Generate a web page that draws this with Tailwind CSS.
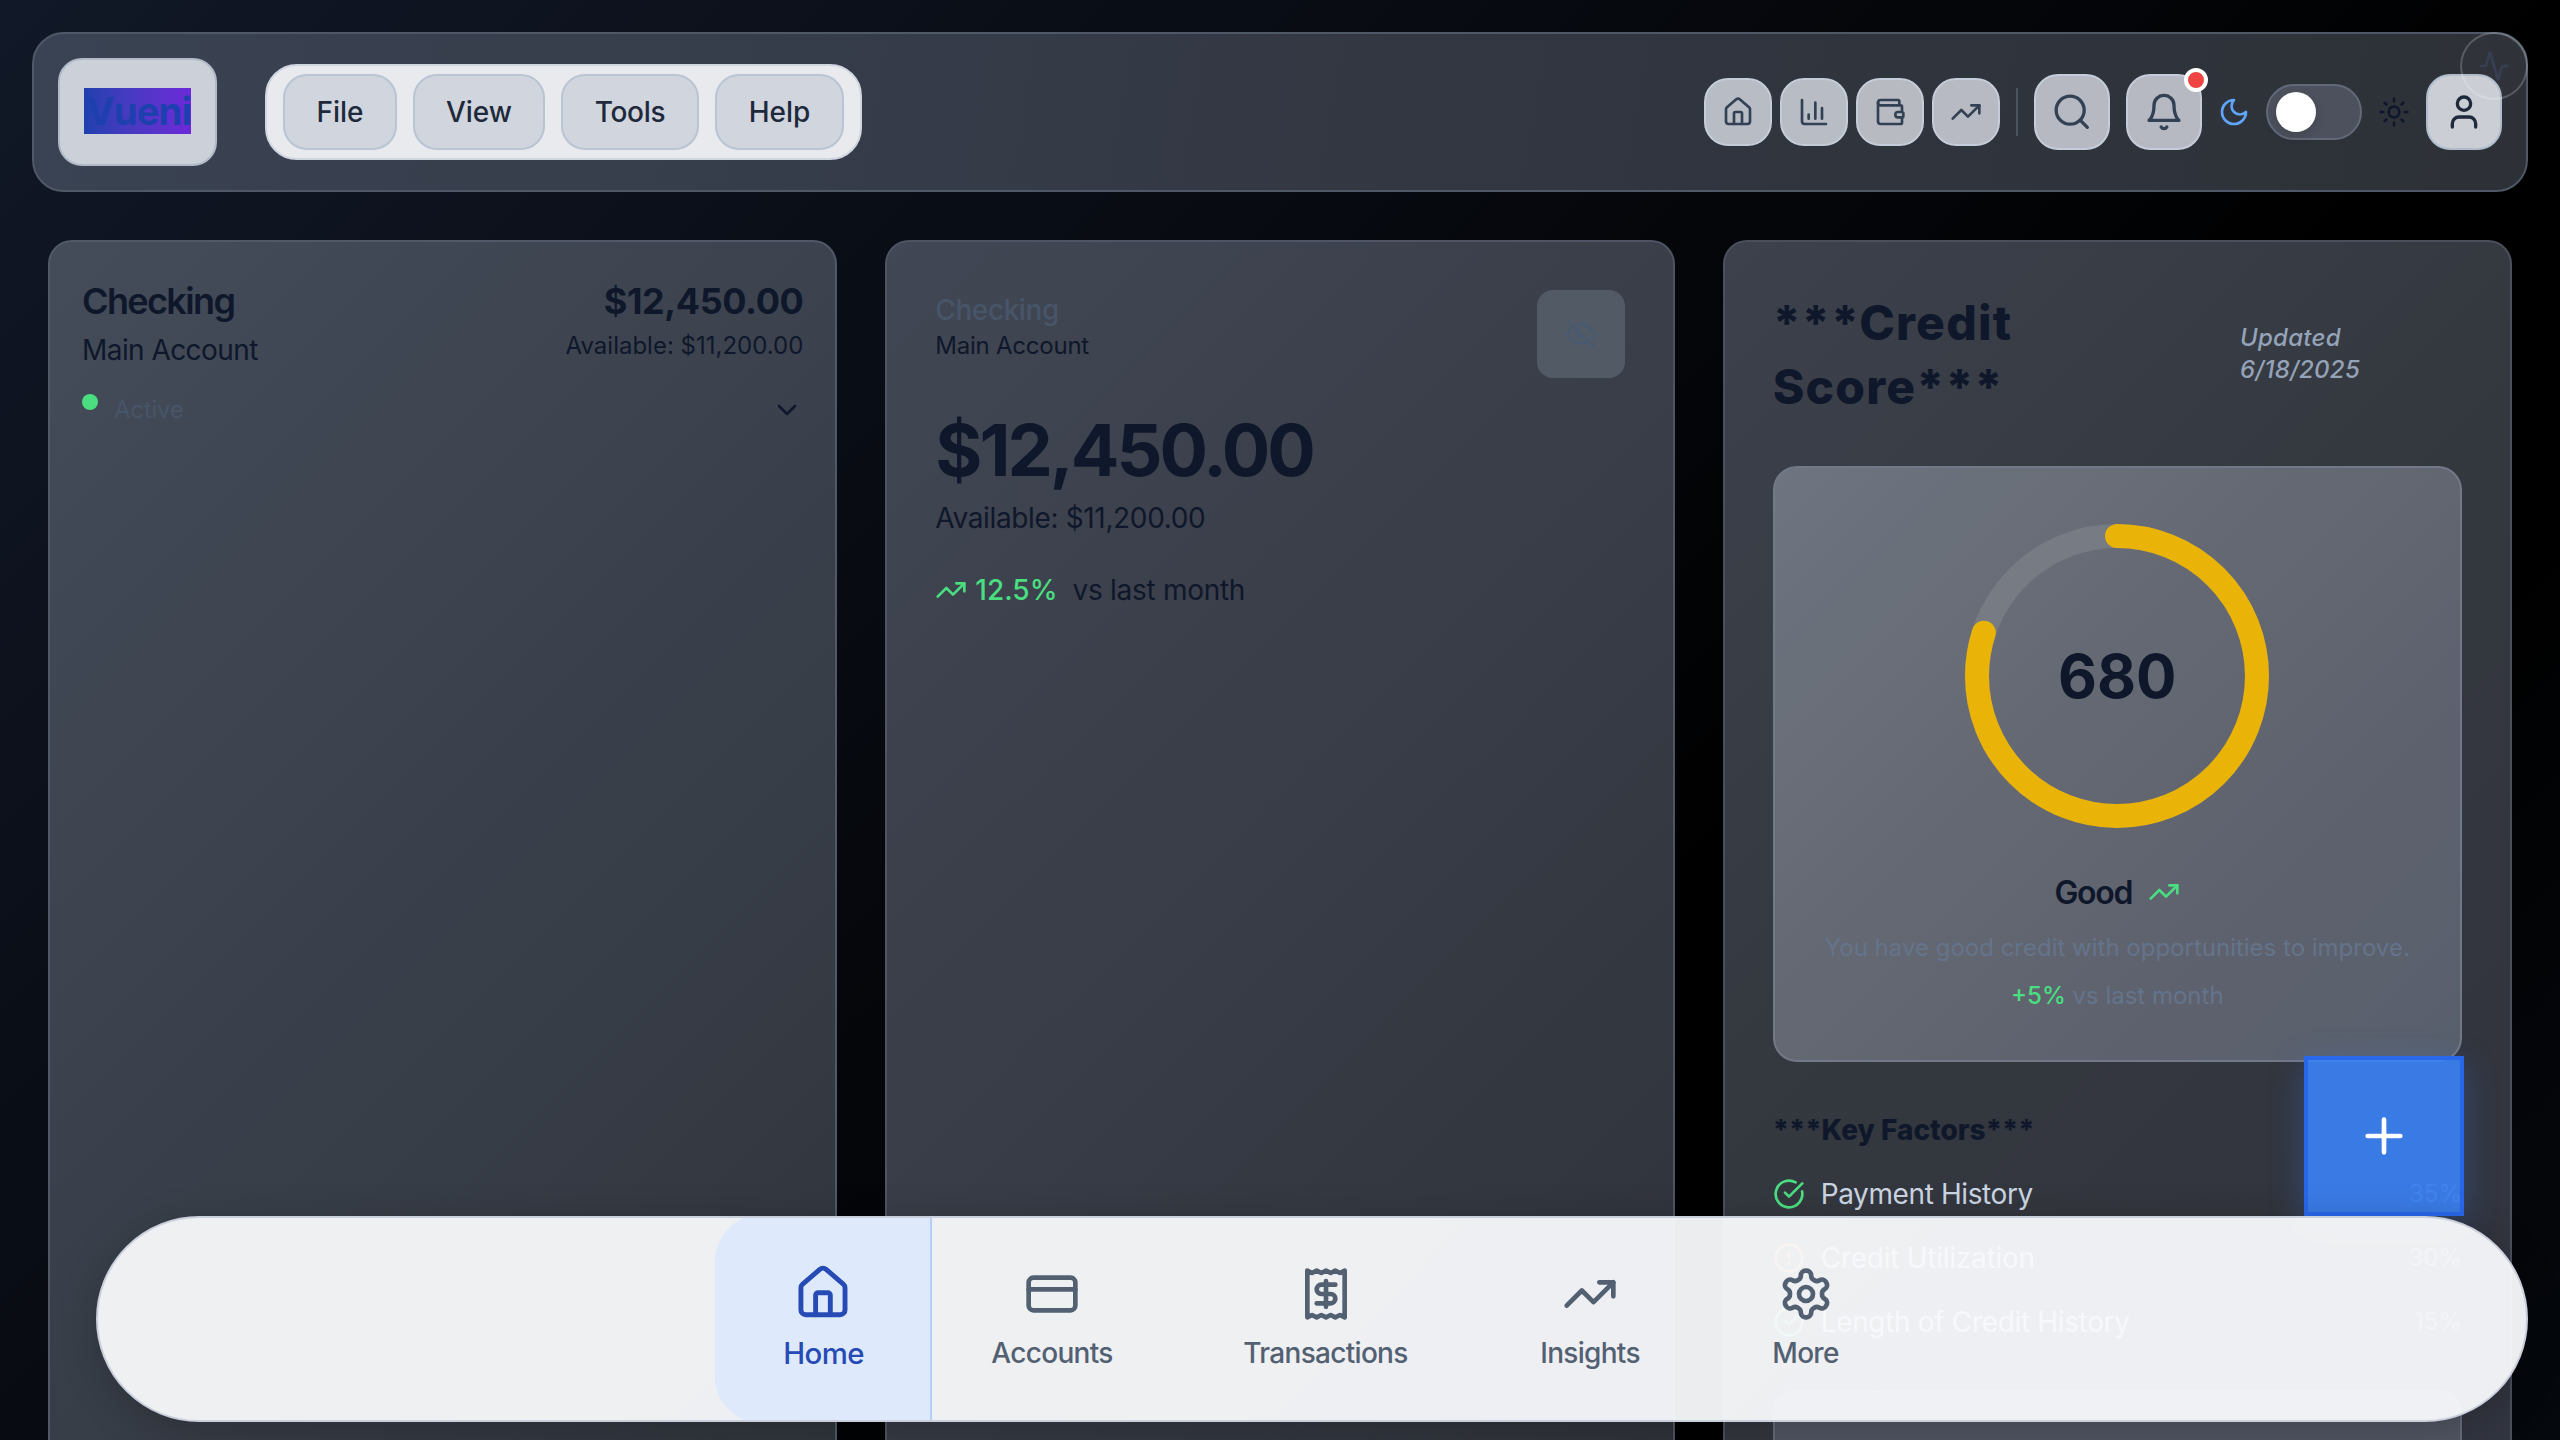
<!DOCTYPE html>
<html lang="en">
<head>
<meta charset="utf-8">
<title>Vueni</title>
<script src="https://cdn.jsdelivr.net/npm/@tailwindcss/browser@4"></script>
</head>
<body class="relative w-[2560px] h-[1440px] overflow-hidden bg-[linear-gradient(135deg,#111827_0px,#000_1850px,#000_2150px,#05080d_2830px)] font-['Inter',sans-serif] text-[28px] leading-[40px] text-[#0f172a]">
<svg class="hidden">
  <defs>
    <g id="house"><path d="M15 21v-8a1 1 0 0 0-1-1h-4a1 1 0 0 0-1 1v8"/><path d="M3 10a2 2 0 0 1 .709-1.528l7-5.999a2 2 0 0 1 2.582 0l7 5.999A2 2 0 0 1 21 10v9a2 2 0 0 1-2 2H5a2 2 0 0 1-2-2z"/></g>
    <g id="trend"><path d="M22 7 13.5 15.5 8.5 10.5 2 17"/><path d="M16 7h6v6"/></g>
    <g id="check"><path d="M21.801 10A10 10 0 1 1 17 3.335"/><path d="m9 11 3 3L22 4"/></g>
  </defs>
</svg>

<div class="flex flex-col h-full">
  <header class="mx-8 mt-8 h-40 shrink-0 flex items-center justify-between px-6 rounded-[32px] border-2 border-[#4f5867] bg-[linear-gradient(100deg,#3a4353,#31353f_65%,#2d3137)]">
    <div class="flex items-center">
      <div class="h-[108px] w-[159px] flex items-center justify-center rounded-[24px] border-2 border-[#b0bac8] bg-[#ccd1d9]">
        <span class="w-[107px] h-[46px] -translate-y-[1px] flex items-center justify-end bg-linear-to-r from-[#1e40af] to-[#6d28d9] text-[38.4px] tracking-[-0.025em] font-bold text-[#1e40af] whitespace-nowrap">Vueni</span>
      </div>
      <nav class="ml-12 h-24 flex items-center gap-4 px-4 rounded-[32px] border-2 border-[#cfd6df] bg-[#e8eaee] font-medium text-[#1e293b]">
        <a class="h-[76px] w-[114px] flex items-center justify-center rounded-[24px] border-2 border-[#bac4d3] bg-[#d1d5de]">File</a>
        <a class="h-[76px] w-[132px] flex items-center justify-center rounded-[24px] border-2 border-[#bac4d3] bg-[#d1d5de]">View</a>
        <a class="h-[76px] w-[138px] flex items-center justify-center rounded-[24px] border-2 border-[#bac4d3] bg-[#d1d5de] tracking-[-0.01em]">Tools</a>
        <a class="h-[76px] w-[129px] flex items-center justify-center rounded-[24px] border-2 border-[#bac4d3] bg-[#d1d5de]">Help</a>
      </nav>
    </div>
    <div class="flex items-center gap-4 text-[#334155]">
      <div class="flex gap-2">
        <button class="size-[68px] flex items-center justify-center rounded-[24px] border-2 border-[#c3ccd8] bg-[#b8bcc5]"><svg class="size-8" viewBox="0 0 24 24" fill="none" stroke="currentColor" stroke-width="2" stroke-linecap="round" stroke-linejoin="round"><use href="#house"/></svg></button>
        <button class="size-[68px] flex items-center justify-center rounded-[24px] border-2 border-[#c3ccd8] bg-[#b8bcc4]"><svg class="size-8" viewBox="0 0 24 24" fill="none" stroke="currentColor" stroke-width="2" stroke-linecap="round" stroke-linejoin="round"><path d="M3 3v16a2 2 0 0 0 2 2h16"/><path d="M18 17V9"/><path d="M13 17V5"/><path d="M8 17v-3"/></svg></button>
        <button class="size-[68px] flex items-center justify-center rounded-[24px] border-2 border-[#c3ccd8] bg-[#b7bbc1]"><svg class="size-8" viewBox="0 0 24 24" fill="none" stroke="currentColor" stroke-width="2" stroke-linecap="round" stroke-linejoin="round"><path d="M19 7V4a1 1 0 0 0-1-1H5a2 2 0 0 0 0 4h15a1 1 0 0 1 1 1v4h-3a2 2 0 0 0 0 4h3a1 1 0 0 0 1-1v-2a1 1 0 0 0-1-1"/><path d="M3 5v14a2 2 0 0 0 2 2h15a1 1 0 0 0 1-1v-4"/></svg></button>
        <button class="size-[68px] flex items-center justify-center rounded-[24px] border-2 border-[#c3ccd8] bg-[#b7bac2]"><svg class="size-8" viewBox="0 0 24 24" fill="none" stroke="currentColor" stroke-width="2" stroke-linecap="round" stroke-linejoin="round"><use href="#trend"/></svg></button>
      </div>
      <div class="w-[2px] h-12 bg-[#4d5461]"></div>
      <button class="size-[76px] flex items-center justify-center rounded-[24px] border-2 border-[#c3ccd8] bg-[#b7b9c2]"><svg class="size-10" viewBox="0 0 24 24" fill="none" stroke="currentColor" stroke-width="2" stroke-linecap="round" stroke-linejoin="round"><circle cx="10.9" cy="10.9" r="8.4"/><path d="m21.2 21.2-4.3-4.3"/></svg></button>
      <button class="relative size-[76px] flex items-center justify-center rounded-[24px] border-2 border-[#c3ccd8] bg-[#b7b9c2]"><svg class="size-10" viewBox="0 0 24 24" fill="none" stroke="currentColor" stroke-width="2" stroke-linecap="round" stroke-linejoin="round"><path d="M6 8a6 6 0 0 1 12 0c0 7 3 9 3 9H3s3-2 3-9"/><path d="M10.3 21a1.94 1.94 0 0 0 3.4 0"/></svg>
        <span class="absolute -right-2 -top-2 size-6 rounded-full border-4 border-white bg-[#ef4444]"></span>
      </button>
      <svg class="size-8 text-[#60a5fa]" viewBox="0 0 24 24" fill="none" stroke="currentColor" stroke-width="2" stroke-linecap="round" stroke-linejoin="round"><path d="M12 3a6 6 0 0 0 9 9 9 9 0 1 1-9-9Z"/></svg>
      <div class="w-24 h-14 flex items-center pl-2 rounded-full border-2 border-[#626979] bg-[#4c515d]"><span class="size-10 rounded-full bg-white shadow-[0_4px_12px_rgba(0,0,0,0.15)]"></span></div>
      <svg class="size-8 text-[#0f172a]" viewBox="0 0 24 24" fill="none" stroke="currentColor" stroke-width="2" stroke-linecap="round" stroke-linejoin="round"><circle cx="12" cy="12" r="4"/><path d="M12 2v2M12 20v2M4.93 4.93l1.41 1.41M17.66 17.66l1.41 1.41M2 12h2M20 12h2M6.34 17.66l-1.41 1.41M19.07 4.93l-1.41 1.41"/></svg>
      <button class="size-[76px] flex items-center justify-center rounded-[24px] border-2 border-[#b0bccb] bg-[#cbced4] text-[#1e293b]"><svg class="size-10" viewBox="0 0 24 24" fill="none" stroke="currentColor" stroke-width="2" stroke-linecap="round" stroke-linejoin="round"><path d="M19 21v-2a4 4 0 0 0-4-4H9a4 4 0 0 0-4 4v2"/><circle cx="12" cy="7" r="4"/></svg></button>
    </div>
  </header>

  <main class="mt-12 px-12 h-[1300px] shrink-0 grid grid-cols-3 gap-12">
    <section class="p-8 rounded-[24px] border-2 border-[#515968] bg-[linear-gradient(135deg,#444c5a,#2e3239)]">
      <div class="flex justify-between">
        <div>
          <h3 class="mt-[4px] h-[46px] leading-[46px] text-[36px] font-semibold tracking-[-0.045em]">Checking</h3>
          <p class="mt-[6px] tracking-[-0.02em]">Main Account</p>
        </div>
        <div class="text-right">
          <p class="mt-[4px] h-[46px] leading-[46px] text-[36px] font-bold tracking-[-0.012em]">$12,450.00</p>
          <p class="mt-[6px] text-[24px] leading-[32px]">Available: $11,200.00</p>
        </div>
      </div>
      <div class="mt-[24px] flex items-center justify-between">
        <div class="flex gap-4 text-[24px] leading-[32px] text-[#475569]"><span class="size-4 rounded-full bg-[#4ade80]"></span><span class="tracking-[-0.01em]">Active</span></div>
        <svg class="size-8" viewBox="0 0 24 24" fill="none" stroke="currentColor" stroke-width="2" stroke-linecap="round" stroke-linejoin="round"><path d="m6 9 6 6 6-6"/></svg>
      </div>
    </section>

    <section class="p-12 rounded-[24px] border-2 border-[#4e5463] bg-[linear-gradient(135deg,#414754,#2d3037)]">
      <div class="flex justify-between h-[88px]">
        <div>
          <p class="font-medium text-[#475569] tracking-[-0.015em]">Checking</p>
          <p class="text-[24px] leading-[32px] tracking-[-0.01em]">Main Account</p>
        </div>
        <button class="size-[88px] flex items-center justify-center rounded-2xl bg-[#525a66] text-[#485a70]"><svg class="size-8" viewBox="0 0 24 24" fill="none" stroke="currentColor" stroke-width="2" stroke-linecap="round" stroke-linejoin="round"><path d="M10.733 5.076a10.744 10.744 0 0 1 11.205 6.575 1 1 0 0 1 0 .696 10.747 10.747 0 0 1-1.444 2.49"/><path d="M14.084 14.158a3 3 0 0 1-4.242-4.242"/><path d="M17.479 17.499a10.75 10.75 0 0 1-15.417-5.151 1 1 0 0 1 0-.696 10.75 10.75 0 0 1 4.446-5.143"/><path d="m2 2 20 20"/></svg></button>
      </div>
      <p class="mt-[36px] h-[72px] leading-[72px] text-[72px] font-bold tracking-[-0.042em]">$12,450.00</p>
      <p class="mt-[12px] tracking-[-0.0125em]">Available: $11,200.00</p>
      <div class="mt-[32px] flex items-center">
        <svg class="size-8 text-[#4ade80]" viewBox="0 0 24 24" fill="none" stroke="currentColor" stroke-width="2" stroke-linecap="round" stroke-linejoin="round"><use href="#trend"/></svg>
        <span class="ml-2 font-medium text-[#4ade80]">12.5%</span><span class="ml-[15px] tracking-[-0.01em]">vs last month</span>
      </div>
    </section>

    <section class="p-12 rounded-[24px] border-2 border-[#4a4f5c] bg-[linear-gradient(135deg,#3d414c,#34383f_40%,#32353d_70%,#313541)]">
      <div class="flex items-center justify-between h-32">
        <h2 class="w-[300px] text-[48px] leading-[64px] font-extrabold tracking-[0.025em] pt-[2px]">***Credit Score***</h2>
        <p class="w-[222px] pr-20 text-[24px] leading-[32px] italic font-medium tracking-[0.01em] text-[#94a3b8]">Updated 6/18/2025</p>
      </div>
      <div class="mt-12 h-[596px] shrink-0 flex flex-col items-center pt-12 rounded-[24px] border-2 border-[#727986] bg-[linear-gradient(135deg,#6e7580,#656973_40%,#5e626e_70%,#585f6c)]">
        <div class="relative size-80">
          <svg class="size-80" viewBox="0 0 320 320" fill="none" stroke-width="24"><circle cx="160" cy="160" r="140" stroke="#fff" stroke-opacity=".1"/><circle cx="160" cy="160" r="140" stroke="#eab308" stroke-linecap="round" pathLength="100" stroke-dasharray="80 100" transform="rotate(-90 160 160)"/></svg>
          <div class="absolute inset-0 flex items-center justify-center text-[60px] font-bold">680</div>
        </div>
        <div class="mt-[33px] h-12 flex items-center gap-4 text-[32px] font-semibold tracking-[-0.04em]">Good<svg class="size-8 -translate-y-px text-[#4ade80]" viewBox="0 0 24 24" fill="none" stroke="currentColor" stroke-width="2" stroke-linecap="round" stroke-linejoin="round"><use href="#trend"/></svg></div>
        <p class="mt-[15px] text-[24px] leading-[32px] text-[#64748b]">You have good credit with opportunities to improve.</p>
        <p class="mt-4 text-[24px] leading-[32px] text-[#64748b]"><span class="font-medium text-[#4ade80]">+5%</span> vs last month</p>
      </div>
      <h4 class="mt-12 font-extrabold">***Key Factors***</h4>
      <div class="mt-6 flex flex-col gap-6 text-[#cbd5e1]">
        <div class="flex items-center h-10"><svg class="size-8 text-[#4ade80]" viewBox="0 0 24 24" fill="none" stroke="currentColor" stroke-width="2" stroke-linecap="round" stroke-linejoin="round"><use href="#check"/></svg><span class="ml-4 tracking-[-0.014em]">Payment History</span><span class="ml-auto text-[24px] text-[#7c8ba1]">35%</span></div>
        <div class="flex items-center h-10"><svg class="size-8 text-[#fb923c]" viewBox="0 0 24 24" fill="none" stroke="currentColor" stroke-width="2" stroke-linecap="round" stroke-linejoin="round"><circle cx="12" cy="12" r="10"/><path d="M12 8v4M12 16h.01"/></svg><span class="ml-4 tracking-[-0.009em]">Credit Utilization</span><span class="ml-auto text-[24px] text-[#7c8ba1]">30%</span></div>
        <div class="flex items-center h-10"><svg class="size-8 text-[#4ade80]" viewBox="0 0 24 24" fill="none" stroke="currentColor" stroke-width="2" stroke-linecap="round" stroke-linejoin="round"><use href="#check"/></svg><span class="ml-4 tracking-[-0.012em]">Length of Credit History</span><span class="ml-auto text-[24px] text-[#7c8ba1]">15%</span></div>
      </div>
      <div class="mt-12 h-[200px] rounded-[24px] border-2 border-[#656b7a] bg-[#505562]"></div>
    </section>
  </main>
</div>

<!-- activity monitor toggle, over the header corner -->
<div class="absolute left-[2460px] top-8 size-[68px] flex items-center justify-center rounded-full border-2 border-white/20 bg-white/[0.01]">
  <svg class="size-8 text-[#475586]/35" viewBox="0 0 24 24" fill="none" stroke="currentColor" stroke-width="2" stroke-linecap="round" stroke-linejoin="round"><path d="M22 12h-2.48a2 2 0 0 0-1.93 1.46l-2.35 8.36a.25.25 0 0 1-.48 0L9.24 2.18a.25.25 0 0 0-.48 0l-2.35 8.36A2 2 0 0 1 4.49 12H2"/></svg>
</div>

<!-- floating action button -->
<button class="absolute left-[2304px] top-[1056px] size-40 flex items-center justify-center border-4 border-[#2563eb]/80 bg-[#3b82f6]/90 text-white shadow-[0_8px_32px_rgba(59,130,246,0.3)]">
  <svg class="size-14" viewBox="0 0 24 24" fill="none" stroke="currentColor" stroke-width="2" stroke-linecap="round" stroke-linejoin="round"><path d="M5 12h14M12 5v14"/></svg>
</button>

<!-- bottom navigation -->
<nav class="absolute left-24 top-[1216px] w-[2432px] h-[206px] flex items-center justify-center overflow-hidden rounded-full border-2 border-[#c9cfdb] bg-[#f9fafc]/95 shadow-[0_8px_40px_rgba(0,0,0,0.2)] font-medium tracking-[-0.025em] text-[#526072]">
  <a class="w-[207px] h-[200px] flex flex-col items-center pt-[47px] gap-[10px] scale-105 rounded-l-[46px] border-r-2 border-[#b0cdf7] bg-[#deeafb] text-[#274bb5]"><svg class="size-14" viewBox="0 0 24 24" fill="none" stroke="currentColor" stroke-width="2" stroke-linecap="round" stroke-linejoin="round"><use href="#house"/></svg><span class="translate-x-px tracking-[-0.02em]">Home</span></a>
  <a class="w-[251px] h-[202px] flex flex-col items-center pt-12 gap-[11px]"><svg class="size-14" viewBox="0 0 24 24" fill="none" stroke="currentColor" stroke-width="2" stroke-linecap="round" stroke-linejoin="round"><rect width="20" height="14" x="2" y="5" rx="2"/><path d="M2 10h20"/></svg>Accounts</a>
  <a class="w-[296px] h-[202px] flex flex-col items-center pt-12 gap-[11px]"><svg class="size-14" viewBox="0 0 24 24" fill="none" stroke="currentColor" stroke-width="2" stroke-linecap="round" stroke-linejoin="round"><path d="M4 2v20l2-1 2 1 2-1 2 1 2-1 2 1 2-1 2 1V2l-2 1-2-1-2 1-2-1-2 1-2-1-2 1Z"/><path d="M16 8h-6a2 2 0 1 0 0 4h4a2 2 0 1 1 0 4H8"/><path d="M12 17.5v-11"/></svg>Transactions</a>
  <a class="w-[233px] h-[202px] flex flex-col items-center pt-12 gap-[11px]"><svg class="size-14" viewBox="0 0 24 24" fill="none" stroke="currentColor" stroke-width="2" stroke-linecap="round" stroke-linejoin="round"><use href="#trend"/></svg>Insights</a>
  <a class="w-[198px] h-[202px] flex flex-col items-center pt-12 gap-[11px]"><svg class="size-14" viewBox="0 0 24 24" fill="none" stroke="currentColor" stroke-width="2" stroke-linecap="round" stroke-linejoin="round"><path d="M12.22 2h-.44a2 2 0 0 0-2 2v.18a2 2 0 0 1-1 1.73l-.43.25a2 2 0 0 1-2 0l-.15-.08a2 2 0 0 0-2.73.73l-.22.38a2 2 0 0 0 .73 2.73l.15.1a2 2 0 0 1 1 1.72v.51a2 2 0 0 1-1 1.74l-.15.09a2 2 0 0 0-.73 2.73l.22.38a2 2 0 0 0 2.73.73l.15-.08a2 2 0 0 1 2 0l.43.25a2 2 0 0 1 1 1.73V20a2 2 0 0 0 2 2h.44a2 2 0 0 0 2-2v-.18a2 2 0 0 1 1-1.73l.43-.25a2 2 0 0 1 2 0l.15.08a2 2 0 0 0 2.73-.73l.22-.39a2 2 0 0 0-.73-2.73l-.15-.08a2 2 0 0 1-1-1.74v-.5a2 2 0 0 1 1-1.74l.15-.09a2 2 0 0 0 .73-2.73l-.22-.38a2 2 0 0 0-2.73-.73l-.15.08a2 2 0 0 1-2 0l-.43-.25a2 2 0 0 1-1-1.73V4a2 2 0 0 0-2-2z"/><circle cx="12" cy="12" r="3"/></svg>More</a>
</nav>
</body>
</html>
